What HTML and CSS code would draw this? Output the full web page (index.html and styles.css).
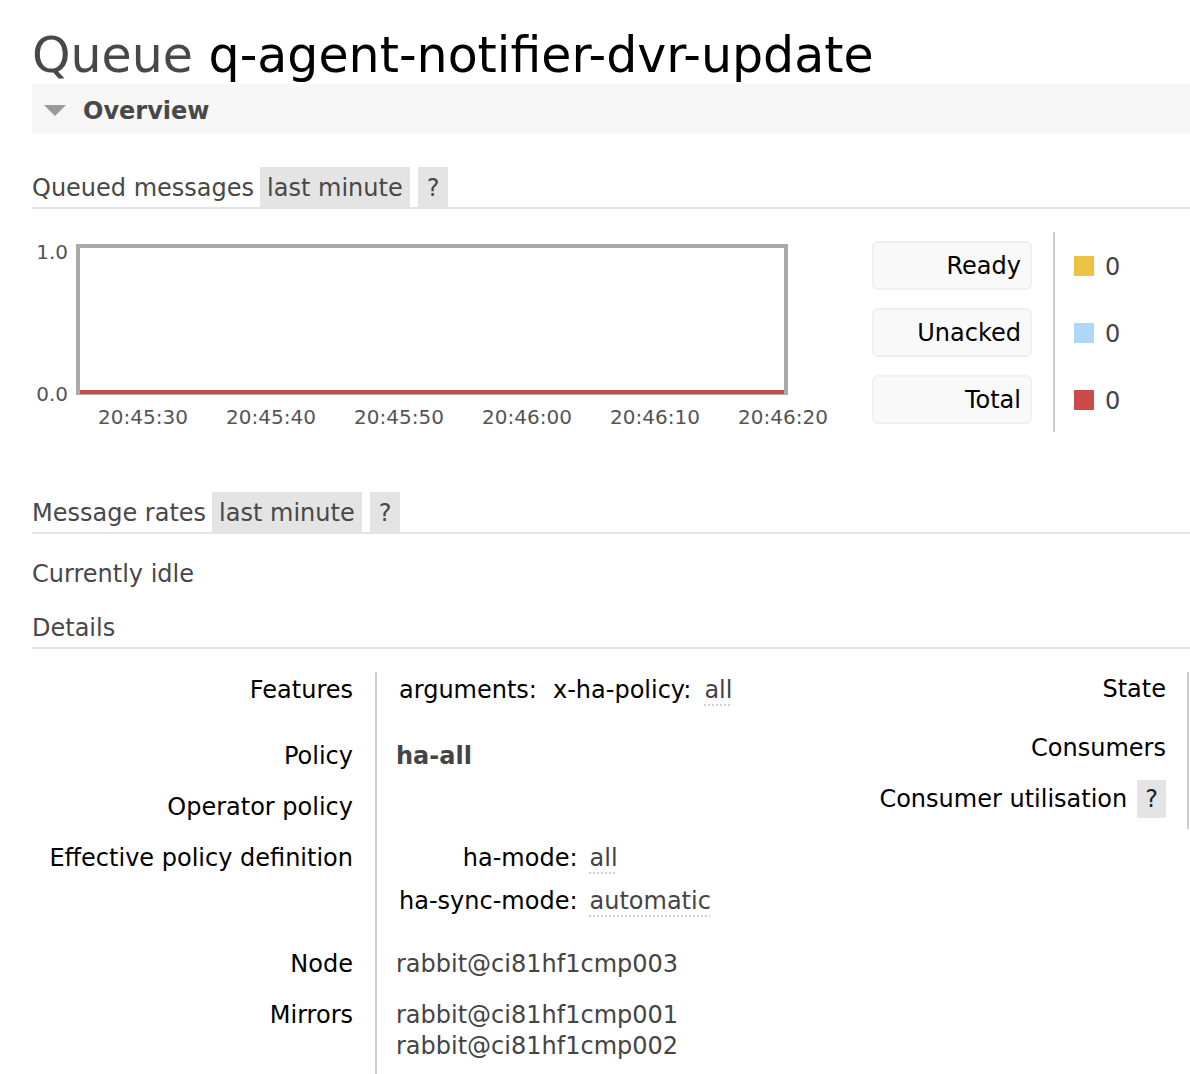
FILE: index.html
```html
<!DOCTYPE html>
<html lang="en">
<head>
<meta charset="utf-8">
<title>Queue q-agent-notifier-dvr-update</title>
<link rel="stylesheet" href="styles.css">
</head>
<body>
<div class="page">
  <h1><span class="kind">Queue</span> q-agent-notifier-dvr-update</h1>

  <div class="section-head"><span class="tri"></span>Overview</div>

  <div class="subhead first">
    <span class="title">Queued messages</span>
    <span class="tag">last minute</span>
    <span class="tag help">?</span>
  </div>

  <div class="chart-row">
    <div class="chart">
      <div class="ylab top">1.0</div>
      <div class="ylab bot">0.0</div>
      <div class="plot"><div class="series"></div></div>
      <div class="xaxis">
        <span>20:45:30</span>
        <span>20:45:40</span>
        <span>20:45:50</span>
        <span>20:46:00</span>
        <span>20:46:10</span>
        <span>20:46:20</span>
      </div>
    </div>
    <div class="legend">
      <div class="legend-keys">
        <div class="lkey">Ready</div>
        <div class="lkey">Unacked</div>
        <div class="lkey">Total</div>
      </div>
      <div class="legend-vals">
        <div class="lval"><span class="sw ready"></span>0</div>
        <div class="lval"><span class="sw unacked"></span>0</div>
        <div class="lval"><span class="sw total"></span>0</div>
      </div>
    </div>
  </div>

  <div class="subhead rates">
    <span class="title">Message rates</span>
    <span class="tag">last minute</span>
    <span class="tag help">?</span>
  </div>

  <p class="idle">Currently idle</p>

  <div class="subhead details-head"><span class="title">Details</span></div>

  <div class="details">
    <div class="lt">
      <div class="row features">
        <div class="k">Features</div>
        <div class="v">
          <div class="mini">
            <span class="blk">arguments:</span>
            <span class="blk">x-ha-policy:<span class="abbr">all</span></span>
          </div>
        </div>
      </div>
      <div class="row">
        <div class="k">Policy</div>
        <div class="v"><b class="pol">ha-all</b></div>
      </div>
      <div class="row">
        <div class="k">Operator policy</div>
        <div class="v"></div>
      </div>
      <div class="row effective">
        <div class="k">Effective policy definition</div>
        <div class="v">
          <div class="kv">
            <span class="kk">ha-mode:</span><span><span class="abbr">all</span></span>
            <span class="kk">ha-sync-mode:</span><span><span class="abbr">automatic</span></span>
          </div>
        </div>
      </div>
      <div class="row">
        <div class="k">Node</div>
        <div class="v">rabbit@ci81hf1cmp003</div>
      </div>
      <div class="row mirrors">
        <div class="k">Mirrors</div>
        <div class="v">rabbit@ci81hf1cmp001<br>rabbit@ci81hf1cmp002</div>
      </div>
    </div>

    <div class="rt">
      <div class="row s1">
        <div class="k">State</div>
        <div class="v"></div>
      </div>
      <div class="row s2">
        <div class="k">Consumers</div>
        <div class="v"></div>
      </div>
      <div class="row s3">
        <div class="k">Consumer utilisation<span class="qhelp">?</span></div>
        <div class="v"></div>
      </div>
    </div>
  </div>
</div>
</body>
</html>
```

FILE: styles.css
```css
* { box-sizing: border-box; }

html, body {
  margin: 0;
  padding: 0;
}

body {
  width: 1190px;
  height: 1074px;
  overflow: hidden;
  background: #fff;
  color: #000;
  font-family: "DejaVu Sans", Verdana, sans-serif;
  font-size: 24px;
}

.page {
  padding-left: 32px;
}

h1 {
  margin: 28px 0 0;
  font-size: 49px;
  line-height: 56px;
  font-weight: normal;
  color: #000;
  white-space: nowrap;
}

h1 .kind { color: #484848; }

.section-head {
  height: 50px;
  background: #f7f7f7;
  display: flex;
  align-items: center;
  padding: 3px 0 0 12px;
  font-weight: bold;
  color: #484848;
}

.tri {
  width: 0;
  height: 0;
  border-left: 11px solid transparent;
  border-right: 11px solid transparent;
  border-top: 11px solid #9a9a9a;
  margin-right: 17px;
}

.subhead {
  display: flex;
  height: 42px;
  line-height: 38px;
  border-bottom: 2px solid #e4e4e4;
  color: #484848;
  white-space: nowrap;
}

.subhead .title { padding-top: 2px; }

.subhead.first { margin-top: 33px; }
.subhead.rates { margin-top: 60px; }
.subhead.details-head { margin-top: 18px; }

.tag {
  background: #e4e4e4;
  padding: 2px 7px 0;
  margin-left: 6px;
}

.tag.help {
  padding: 2px 9px 0;
  margin-left: 8px;
}

/* chart */
.chart-row {
  display: flex;
  margin-top: 23px;
  height: 200px;
}

.chart {
  position: relative;
  width: 840px;
  height: 200px;
  flex: none;
}

.plot {
  position: absolute;
  left: 44px;
  top: 12px;
  width: 712px;
  height: 151px;
  border: 4px solid #aaa;
}

.series {
  position: absolute;
  left: 0;
  right: 0;
  bottom: -3px;
  height: 4px;
  background: #cb4b4b;
}

.ylab {
  position: absolute;
  left: 0;
  width: 36px;
  text-align: right;
  font-size: 20px;
  line-height: 20px;
  color: #545454;
}

.ylab.top { top: 10px; }
.ylab.bot { top: 152px; }

.xaxis {
  position: absolute;
  left: 47px;
  top: 175px;
  display: flex;
  font-size: 20px;
  line-height: 20px;
  color: #545454;
}

.xaxis span {
  width: 128px;
  text-align: center;
}

/* legend */
.legend {
  display: flex;
  height: 200px;
}

.legend-keys {
  width: 160px;
  padding-top: 9px;
  margin-right: 21px;
  display: flex;
  flex-direction: column;
  gap: 18px;
}

.lkey {
  height: 49px;
  border: 2px solid #efefef;
  border-radius: 6px;
  background: #f9f9f9;
  text-align: right;
  padding: 2px 9px 0 0;
  line-height: 43px;
}

.legend-vals {
  border-left: 2px solid #ccc;
  padding: 9px 0 0 19px;
  display: flex;
  flex-direction: column;
  gap: 18px;
}

.lval {
  height: 49px;
  display: flex;
  align-items: center;
  padding-top: 2px;
  color: #444;
}

.sw {
  width: 20px;
  height: 20px;
  margin: -2px 11px 0 0;
}

.sw.ready { background: #edc240; }
.sw.unacked { background: #afd8f8; }
.sw.total { background: #cb4b4b; }

.idle {
  margin: 25px 0 0;
  line-height: 30px;
  color: #484848;
}

/* details */
.details {
  display: flex;
  margin-top: 23px;
}

.lt { flex: 1; }

.rt {
  width: 330px;
  flex: none;
}

.row { display: flex; }

.row > * {
  padding-top: 3px;
  padding-bottom: 18px;
  line-height: 30px;
}

.k {
  flex: none;
  width: 343px;
  text-align: right;
  padding-right: 22px;
  white-space: nowrap;
}

.v {
  flex: 1;
  border-left: 2px solid #ccc;
  padding-left: 19px;
  color: #444;
  white-space: nowrap;
}

.row.features > * { padding-bottom: 33px; }
.row.effective > * { padding-bottom: 30px; }
.row.mirrors .v { line-height: 31px; }

.mini {
  display: flex;
  gap: 16px;
  padding-left: 3px;
  color: #000;
}

.abbr {
  color: #444;
  margin-left: 13px;
  text-decoration: underline dotted #d0d0d0;
  text-decoration-thickness: 2px;
  text-underline-offset: 6px;
}

.pol {
  color: #444;
  font-weight: bold;
}

.kv {
  display: grid;
  grid-template-columns: auto auto;
  justify-content: start;
  row-gap: 13px;
  padding-left: 3px;
}

.kv .kk {
  text-align: right;
  color: #000;
}

.kv .abbr { margin-left: 12px; }

.rt .k {
  width: 327px;
  padding-right: 21px;
}

.rt .v {
  flex: none;
  width: 3px;
  padding-left: 0;
}

.rt .row.s1 > * { padding-top: 2px; padding-bottom: 26px; }
.rt .row.s2 > * { padding-top: 3px; padding-bottom: 21px; }
.rt .row.s3 > * { padding-top: 0; padding-bottom: 15px; }

.qhelp {
  display: inline-block;
  background: #e4e4e4;
  color: #222;
  line-height: 30px;
  padding: 4px 8px 4px;
  margin: -4px 0 -4px 10px;
}
```
